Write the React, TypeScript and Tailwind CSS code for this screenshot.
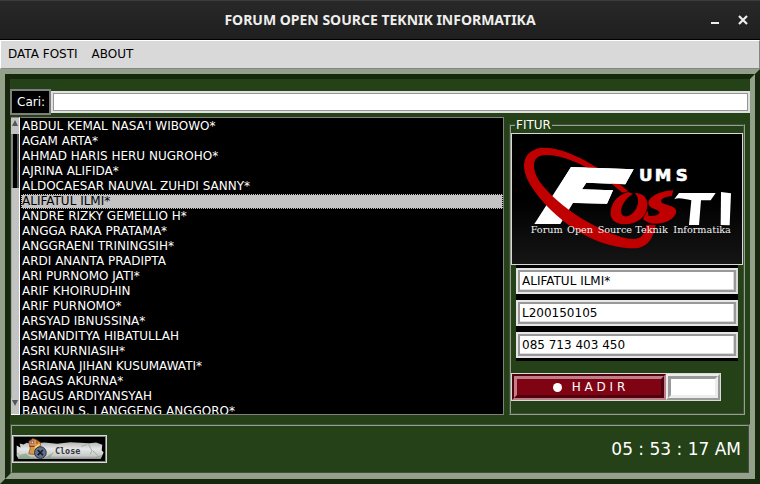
import { useState } from "react";

const members = [
  "ABDUL KEMAL NASA'I WIBOWO*",
  "AGAM ARTA*",
  "AHMAD HARIS HERU NUGROHO*",
  "AJRINA ALIFIDA*",
  "ALDOCAESAR NAUVAL ZUHDI SANNY*",
  "ALIFATUL ILMI*",
  "ANDRE RIZKY GEMELLIO H*",
  "ANGGA RAKA PRATAMA*",
  "ANGGRAENI TRININGSIH*",
  "ARDI ANANTA PRADIPTA",
  "ARI PURNOMO JATI*",
  "ARIF KHOIRUDHIN",
  "ARIF PURNOMO*",
  "ARSYAD IBNUSSINA*",
  "ASMANDITYA HIBATULLAH",
  "ASRI KURNIASIH*",
  "ASRIANA JIHAN KUSUMAWATI*",
  "BAGAS AKURNA*",
  "BAGUS ARDIYANSYAH",
  "BANGUN S. LANGGENG ANGGORO*",
];

function TitleBar() {
  return (
    <header className="relative flex h-10 items-center justify-center border-t border-b border-t-[#3c3c3c] border-b-black bg-linear-to-b from-[#282828] to-[#1f1f1f]">
      <h1 className="font-['Noto_Sans',sans-serif] text-[14px] leading-[18px] font-bold text-[#eeeeec]">
        FORUM OPEN SOURCE TEKNIK INFORMATIKA
      </h1>
      <div className="absolute right-2 flex gap-3">
        <button aria-label="Minimize" className="size-4">
          <svg viewBox="0 0 16 16" className="size-4">
            <path d="M3 10h8v2H3z" fill="#eeeeec" />
          </svg>
        </button>
        <button aria-label="Close window" className="size-4">
          <svg viewBox="0 0 16 16" className="size-4">
            <path d="M3 4L11 12M11 4L3 12" stroke="#eeeeec" strokeWidth="2.200" />
          </svg>
        </button>
      </div>
    </header>
  );
}

function MenuBar() {
  return (
    <nav className="flex h-[29px] items-center gap-[14px] border border-t-white border-r-[#858585] border-b-[#858585] border-l-white bg-[#d9d9d9] px-[7px] text-black">
      <button>DATA FOSTI</button>
      <button>ABOUT</button>
    </nav>
  );
}

function Logo() {
  return (
    <svg
      viewBox="21 57 690 390"
      role="img"
      aria-label="FOSTI UMS"
      className="block h-[132px] w-full border border-[#d9d9d9]"
    >
      <defs>
        <linearGradient id="sky" x1="0" y1="0" x2="0" y2="1">
          <stop offset="0.5" stopColor="#000" />
          <stop offset="1" stopColor="#161616" />
        </linearGradient>
      </defs>
      <rect x="15" y="50" width="702" height="404" fill="url(#sky)" />
      <path
        d="M198 156L386 163L361 208L244 203L231 223L324 226L306 266L204 264L166 327H88Z"
        fill="#fff"
      />
      <path
        d="M370 229C300 165 190 98 120 98C80 98 57 120 57 152C57 182 76 216 114 260C148 298 190 333 239 360C290 387 340 400 388 400C425 400 446 370 452 330H424C418 358 410 372 385 372C340 372 275 336 229 310C180 279 130 236 104 200C92 182 87 168 87 150C88 130 100 120 125 120C190 120 285 172 352 233Z"
        fill="#c00000"
      />
      <path d="M198 156L386 163L361 208L244 203L231 223L324 226L306 266L224 264L165 210Z" fill="#fff" />
      <path
        d="M369 231C334 240 314 272 317 299C320 325 353 333 382 325C411 317 430 292 427 264C425 244 408 233 389 234C403 246 402 268 391 285C379 303 361 309 352 300C342 288 351 258 384 236Z"
        fill="#c00000"
      />
      <path
        d="M505 226C466 228 432 244 430 264C429 281 459 282 463 291C464 300 449 304 431 303L427 286L414 312C427 326 455 330 480 322C505 314 518 296 512 283C505 270 474 270 469 261C466 252 483 244 500 244Z"
        fill="#c00000"
      />
      <path d="M522 234H632L617 256H588L582 330H552L559 256C540 252 522 247 508 252Z" fill="#fff" />
      <path d="M648 231L678 235L674 331L647 330Z" fill="#fff" />
      <text x="402" y="198" fontSize="50" className="font-['DejaVu_Sans',sans-serif] font-bold" fill="#fff" stroke="#fff" strokeWidth="2">
        <tspan x="402">U</tspan>
        <tspan x="449">M</tspan>
        <tspan x="512">S</tspan>
      </text>
      <text y="354" fontSize="29" className="font-['DejaVu_Serif',serif]" fill="#f2f2f2">
        <tspan x="77">Forum</tspan>
        <tspan x="186">Open</tspan>
        <tspan x="278">Source</tspan>
        <tspan x="391">Teknik</tspan>
        <tspan x="505">Informatika</tspan>
      </text>
    </svg>
  );
}

function Field({ label, value }: { label: string; value: string }) {
  return (
    <div className="border-2 border-[#e6e6e6] border-r-[#d9d9d9]">
      <input
        aria-label={label}
        defaultValue={value}
        className="block h-[22px] w-full border-2 border-[#999999] bg-white pr-0 pb-px pl-[2px] text-black shadow-[inset_-1px_-1px_#d9d9d9] outline-none"
      />
    </div>
  );
}

function CloseArt() {
  return (
    <svg viewBox="39 139 276 74" className="block h-6 w-full" aria-hidden="true">
      <defs>
        <linearGradient id="stone" x1="0" y1="0" x2="0" y2="1">
          <stop offset="0" stopColor="#b4b6b4" />
          <stop offset="0.4" stopColor="#e6e6e6" />
          <stop offset="0.8" stopColor="#c9cbc9" />
          <stop offset="1" stopColor="#8b908a" />
        </linearGradient>
      </defs>
      <path
        d="M45 165L57 171L54 159L66 162L76 157L90 160L130 156L170 160L210 155L270 158L290 156L309 163L307 180L313 187L304 207H50L45 196Z"
        fill="url(#stone)"
      />
      <g fill="none" stroke="#7da584" strokeWidth="3" opacity="0.7">
        <path d="M47 188L60 204M146 204L158 186M266 162L277 180L272 192M244 168L262 162M280 182L295 196M287 203L307 196" />
      </g>
      <path d="M50 206L58 193L74 190L94 207ZM130 207L140 198L152 189L146 207Z" fill="#86a989" opacity="0.8" />
      <path d="M82 153L95 144L107 148L118 156V182L106 194L82 191L87 173Z" fill="#d69a42" stroke="#7a4614" strokeWidth="2" />
      <path d="M88 150H98V160H88Z" fill="#7442a8" />
      <path d="M91 153H96V158H91ZM101 170L116 160V164L101 175Z" fill="#f6e2a0" />
      <path d="M84 166H100V170H84ZM106 150H109V160H106Z" fill="#a32b20" />
      <circle cx="118" cy="187" r="18" fill="#627189" stroke="#252e40" strokeWidth="3" />
      <path d="M110 179L126 195M126 179L110 195" stroke="#111827" strokeWidth="5" />
      <text x="163" y="192" fontSize="26" className="font-['DejaVu_Sans_Mono',monospace] font-bold" fill="#33353f">
        Close
      </text>
    </svg>
  );
}

export default function App() {
  const [selected, setSelected] = useState("ALIFATUL ILMI*");
  return (
    <div className="flex min-h-screen flex-col bg-[#254117] font-['DejaVu_Sans',sans-serif] text-[12px] leading-[15px]">
      <TitleBar />
      <MenuBar />
      <main className="flex flex-1 flex-col border-5 border-t-[#93a08a] border-r-[#16270e] border-b-[#16270e] border-l-[#93a08a]">
        <div className="flex flex-1 flex-col border-5 border-t-[#16270e] border-r-[#93a08a] border-b-[#93a08a] border-l-[#16270e] pt-[10px]">
          <div className="flex items-center">
            <label
              htmlFor="search"
              className="flex h-[26px] items-center border-2 border-[#7f7f7f] bg-black pr-1 pl-[5px] text-white"
            >
              Cari:
            </label>
            <div className="flex-1 border-2 border-[#e0e0e0]">
              <input
                id="search"
                className="block h-[18px] w-full border border-[#959595] bg-white px-1 outline-none"
              />
            </div>
          </div>

          <div className="mt-[2px] flex flex-1 gap-[5px] pr-[5px] pl-px">
            <div className="flex flex-1">
              <div
                className="flex w-[9px] flex-col items-center border-t border-r border-b border-t-[#858585] border-r-white border-b-white bg-[#c3c3c3]"
                aria-hidden="true"
              >
                <svg viewBox="0 0 8 16" className="h-4 w-2">
                  <path d="M4 2L7 8H1Z" fill="#555" />
                </svg>
                <div className="h-[54px] w-full border-r-2 border-l-2 border-r-[#555555] border-l-[#858585] bg-black" />
                <div className="w-full flex-1 border-l border-[#a8a8a8]" />
                <svg viewBox="0 0 8 16" className="h-4 w-2">
                  <path d="M4 8L7 2H1Z" fill="#555" />
                </svg>
              </div>
              <select
                aria-label="Data FOSTI"
                size={19}
                value={selected}
                onChange={(e) => setSelected(e.target.value)}
                className="flex-1 overflow-hidden rounded-none border border-[#7f7f7f] border-l-black bg-black p-0 pt-px text-white outline-none"
              >
                {members.map((name) => (
                  <option
                    key={name}
                    value={name}
                    className="h-[15px] p-0 pl-px leading-[15px] checked:bg-[linear-gradient(#c3c3c3,#c3c3c3)] checked:text-black checked:outline-1 checked:-outline-offset-1 checked:outline-black checked:outline-dotted"
                  >
                    {name}
                  </option>
                ))}
              </select>
            </div>

            <fieldset className="w-[236px] border-2 border-[#93a08a] [border-style:groove]">
              <legend className="ml-1 px-px pt-px text-white">FITUR</legend>
              <Logo />
              <div className="mx-[5px] flex flex-col gap-[6px] bg-black py-[3px]">
                <Field label="Nama" value="ALIFATUL ILMI*" />
                <Field label="NIM" value="L200150105" />
                <Field label="Telepon" value="085 713 403 450" />
              </div>
              <div className="mt-3 flex w-[210px] border border-[#d9d9d9]">
                <button className="flex h-[26px] flex-1 border-2 border-t-[#4d020c] border-r-[#bf7f88] border-b-[#bf7f88] border-l-[#4d020c]">
                  <span className="flex h-full w-full items-center justify-center gap-[10px] border-3 border-t-[#bf7f88] border-r-[#4d020c] border-b-[#4d020c] border-l-[#bf7f88] bg-[#800314] text-white">
                    <span className="size-[9px] rounded-full bg-white" />
                    H A D I R
                  </span>
                </button>
                <div className="w-[54px] border-2 border-[#ececec] border-r-[#999999] border-b-[#999999]">
                  <input
                    aria-label="Jumlah hadir"
                    className="block h-[22px] w-full border-3 border-t-[#999999] border-r-[#ececec] border-b-[#ececec] border-l-[#999999] bg-white outline-none"
                  />
                </div>
              </div>
            </fieldset>
          </div>

          <footer className="mt-[9px] flex h-[50px] items-center justify-between border-2 border-[#93a08a] pr-[7px] [border-style:groove]">
            <button aria-label="Close" className="w-[95px] border border-[#d9d9d9]">
              <span className="block border border-[#7f7f7f] bg-black">
                <CloseArt />
              </span>
            </button>
            <time className="text-[17px] leading-5 text-white">05 : 53 : 17 AM</time>
          </footer>
        </div>
      </main>
    </div>
  );
}
